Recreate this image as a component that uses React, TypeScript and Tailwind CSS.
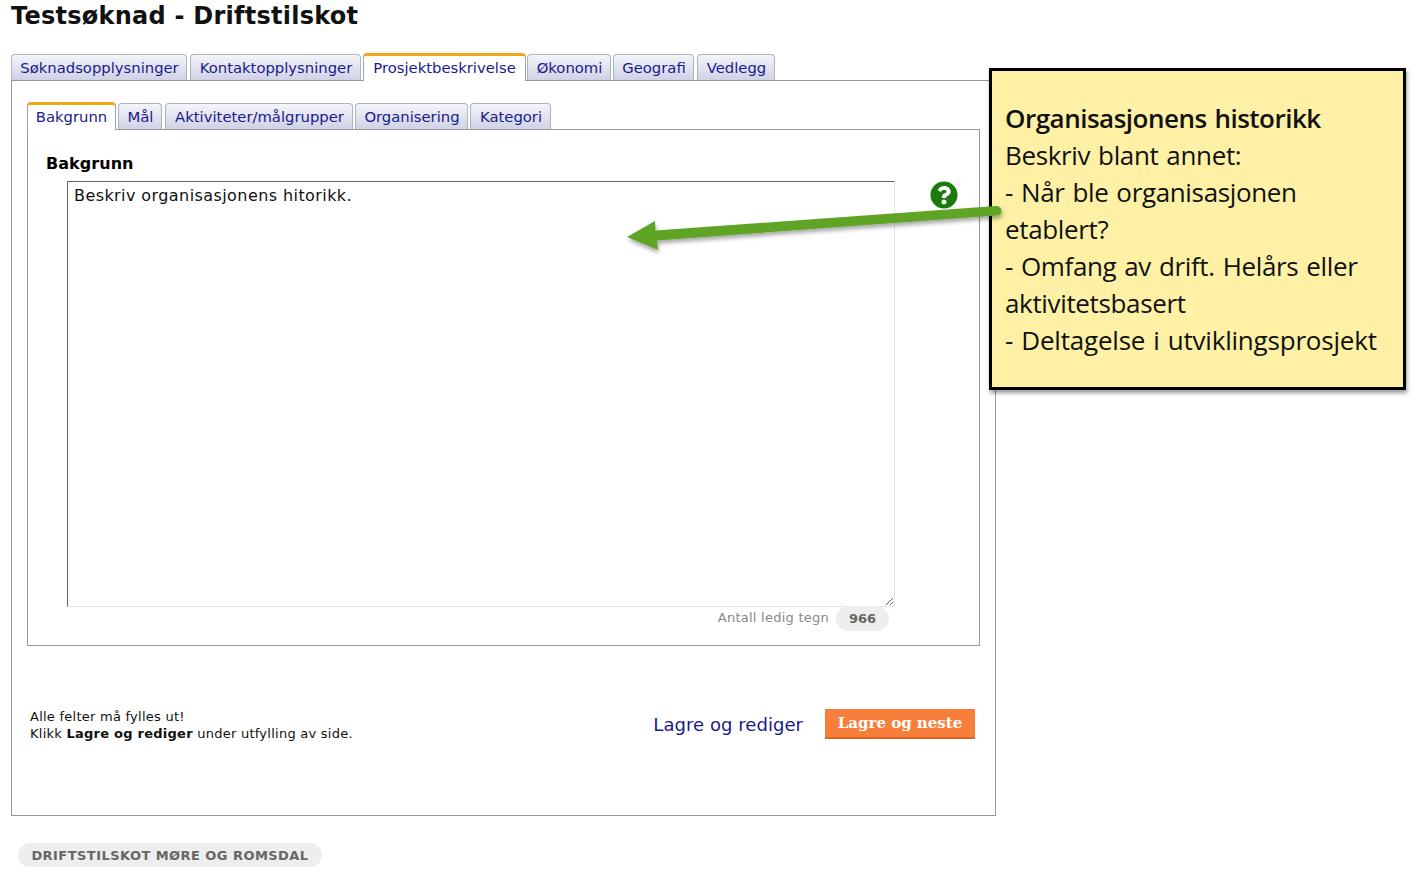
import { FaQuestionCircle } from "react-icons/fa";

const mainTabs = [
  { label: "Søknadsopplysninger", w: "w-[176px]" },
  { label: "Kontaktopplysninger", w: "w-[171px] ml-[3px]" },
  { label: "Prosjektbeskrivelse", w: "w-[163px] ml-[2px]", active: true },
  { label: "Økonomi", w: "w-[84px] ml-[1px]" },
  { label: "Geografi", w: "w-[81px] ml-[2px]" },
  { label: "Vedlegg", w: "w-[78px] ml-[3px]" },
];

const subTabs = [
  { label: "Bakgrunn", w: "w-[89px]", active: true },
  { label: "Mål", w: "w-[44px] ml-[2px]" },
  { label: "Aktiviteter/målgrupper", w: "w-[188px] ml-[3px]" },
  { label: "Organisering", w: "w-[113px] ml-[2px]" },
  { label: "Kategori", w: "w-[81px] ml-[2px]" },
];

function Tab({ label, w, active }: { label: string; w: string; active?: boolean }) {
  if (active) {
    return (
      <div
        className={`${w} h-[28px] -mb-px mt-[-2px] flex items-center justify-center rounded-t-[4px] bg-white border-x border-[#9aa5ad] border-t-[3px] border-t-[#f0a818] text-[14.8px] text-[#1a1a8c] z-10`}
      >
        {label}
      </div>
    );
  }
  return (
    <div
      className={`${w} h-[26px] pt-[2px] pl-[1px] flex items-center justify-center rounded-t-[4px] bg-gradient-to-b from-[#f4f5fa] to-[#cfd2e6] border border-b-0 border-[#a9b7bd] text-[14.8px] text-[#1a1a8c]`}
    >
      {label}
    </div>
  );
}

function Arrow() {
  return (
    <svg className="absolute left-[620px] top-[198px] z-30" width="390" height="60" viewBox="620 198 390 60">
      <defs>
        <filter id="sh" x="-5%" y="-30%" width="110%" height="170%">
          <feDropShadow dx="1" dy="3" stdDeviation="2" floodColor="#000" floodOpacity="0.35" />
        </filter>
      </defs>
      <path
        d="M627 237 L655 221 L655.500 230.500 L996 206 Q1001 206 1001.500 210.500 Q1001 215 997 215.500 L657 240.500 L658 250 Z"
        fill="#60a428"
        filter="url(#sh)"
      />
    </svg>
  );
}

export default function App() {
  return (
    <div className="relative w-[1424px] h-[896px] overflow-hidden bg-white font-['DejaVu_Sans','Liberation_Sans',sans-serif] text-black">
      <div className="pl-[11px] pt-[1px] w-[996px]">
        <h1 className="text-[24px] leading-[30px] font-bold text-[#111] tracking-[0.25px]">Testsøknad - Driftstilskot</h1>

        <div className="flex mt-[23px] items-end">
          {mainTabs.map((t) => (
            <Tab key={t.label} {...t} />
          ))}
        </div>

        <div className="h-[736px] border border-[#999] px-[15px] pt-[22px]">
          <div className="flex items-end">
            {subTabs.map((t) => (
              <Tab key={t.label} {...t} />
            ))}
          </div>

          <div className="relative h-[517px] w-[953px] border border-[#999] pl-[18px] pt-[24px]">
            <div className="text-[16px] leading-[20px] font-bold tracking-[0.05px]">Bakgrunn</div>
            <div className="ml-[21px] mt-[7px] flex items-start">
              <textarea
                readOnly
                defaultValue="Beskriv organisasjonens hitorikk."
                className="block w-[828px] h-[426px] resize border border-[#e5e5e5] border-t-[#666] border-l-[#666] px-[6px] pt-[4px] pb-[2px] text-[16px] leading-[20px] tracking-[0.42px] text-[#111] outline-none"
              />
              <FaQuestionCircle className="ml-[35px] text-[#1c7a0c]" size={28} />
            </div>
            <div className="w-[843px] flex justify-end items-center gap-[7px] mt-[-1px]">
              <span className="text-[13px] text-[#888] tracking-[0.25px] mt-[-2px]">Antall ledig tegn</span>
              <span className="w-[53px] h-[25px] rounded-full bg-[#eee] flex items-center justify-center text-[13px] font-bold text-[#666]">
                966
              </span>
            </div>
          </div>

          <div className="flex items-center justify-between mt-[62px] pl-[3px] pr-[5px] w-[953px]">
            <div className="text-[13px] leading-[17px] text-[#111] tracking-[0.25px]">
              <div>Alle felter må fylles ut!</div>
              <div>
                Klikk <b>Lagre og rediger</b> under utfylling av side.
              </div>
            </div>
            <div className="flex items-center gap-[22px] mt-[-2px]">
              <span className="text-[18px] text-[#1a1a8c] tracking-[0.05px]">Lagre og rediger</span>
              <span className="w-[150px] h-[30px] pt-[1px] flex items-center justify-center bg-[#f77f3b] border-b-2 border-[#e0661f] text-white text-[15px] font-bold font-['DejaVu_Serif',serif]">
                Lagre og neste
              </span>
            </div>
          </div>
        </div>

        <div className="mt-[27px] ml-[7px] w-[304px] h-[24px] pt-[1px] rounded-full bg-[#eee] flex items-center justify-center text-[13px] font-bold text-[#666] tracking-[0.45px]">
          DRIFTSTILSKOT MØRE OG ROMSDAL
        </div>
      </div>

      <Arrow />

      <div className="absolute left-[989px] top-[68px] z-20 w-[417px] h-[322px] bg-[#fef1a6] border-[3px] border-black shadow-[1px_3px_4px_rgba(0,0,0,0.4)] pl-[13px] pt-[29px] font-['Open_Sans',sans-serif] text-[26px] leading-[37px] text-[#111] tracking-[-0.35px] [word-spacing:1.5px]">
        <div className="font-semibold tracking-[-0.5px]">Organisasjonens historikk</div>
        <div>Beskriv blant annet:</div>
        <div>- Når ble organisasjonen etablert?</div>
        <div>- Omfang av drift. Helårs eller aktivitetsbasert</div>
        <div className="tracking-[-0.2px]">- Deltagelse i utviklingsprosjekt</div>
      </div>
    </div>
  );
}
